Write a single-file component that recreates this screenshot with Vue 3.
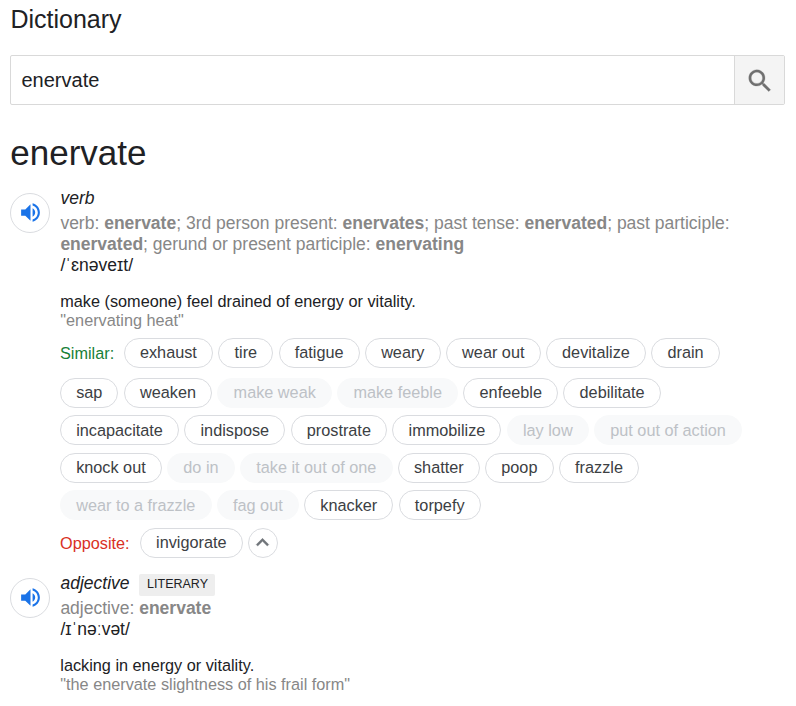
<script setup>
const volumePath =
  'M3 9v6h4l5 5V4L7 9H3zm13.5 3c0-1.77-1.02-3.29-2.5-4.03v8.05c1.48-.73 2.5-2.25 2.5-4.02zM14 3.23v2.06c2.89.86 5 3.54 5 6.71s-2.11 5.85-5 6.71v2.06c4.01-.91 7-4.49 7-8.77s-2.99-7.86-7-8.77z'

const firstSimilar = ['exhaust', 'tire', 'fatigue', 'weary', 'wear out', 'devitalize', 'drain']

const similarRows = [
  [
    { text: 'sap' },
    { text: 'weaken' },
    { text: 'make weak', muted: true },
    { text: 'make feeble', muted: true },
    { text: 'enfeeble' },
    { text: 'debilitate' },
  ],
  [
    { text: 'incapacitate' },
    { text: 'indispose' },
    { text: 'prostrate' },
    { text: 'immobilize' },
    { text: 'lay low', muted: true },
    { text: 'put out of action', muted: true },
  ],
  [
    { text: 'knock out' },
    { text: 'do in', muted: true },
    { text: 'take it out of one', muted: true },
    { text: 'shatter' },
    { text: 'poop' },
    { text: 'frazzle' },
  ],
  [
    { text: 'wear to a frazzle', muted: true },
    { text: 'fag out', muted: true },
    { text: 'knacker' },
    { text: 'torpefy' },
  ],
]
</script>

<template>
  <main class="dictionary">
    <h1 class="title">Dictionary</h1>

    <form class="search" @submit.prevent>
      <div class="search-field">enervate</div>
      <button class="search-button" aria-label="Search">
        <svg width="30" height="30" viewBox="0 0 24 24">
          <path d="M15.5 14h-.79l-.28-.27C15.41 12.59 16 11.11 16 9.5 16 5.91 13.09 3 9.5 3S3 5.91 3 9.5 5.91 16 9.5 16c1.61 0 3.09-.59 4.23-1.57l.27.28v.79l5 4.99L20.49 19l-4.99-5zm-6 0C7.01 14 5 11.99 5 9.5S7.01 5 9.5 5 14 7.01 14 9.5 11.99 14 9.5 14z" />
        </svg>
      </button>
    </form>

    <h2 class="headword">enervate</h2>

    <section class="entry">
      <button class="speaker" aria-label="Listen">
        <svg width="25" height="25" viewBox="0 0 24 24"><path :d="volumePath" /></svg>
      </button>
      <div class="body">
        <div class="pos"><i>verb</i></div>
        <div class="forms">
          <div class="line">verb: <b>enervate</b>; 3rd person present: <b>enervates</b>; past tense: <b>enervated</b>; past participle:</div>
          <div class="line"><b>enervated</b>; gerund or present participle: <b>enervating</b></div>
        </div>
        <div class="phonetic">/ˈɛnəveɪt/</div>
        <p class="definition">make (someone) feel drained of energy or vitality.</p>
        <p class="example">"enervating heat"</p>

        <div class="row lead">
          <span class="label similar">Similar:</span>
          <span v-for="word in firstSimilar" :key="word" class="chip">{{ word }}</span>
        </div>
        <div class="rows">
          <div v-for="(row, i) in similarRows" :key="i" class="row">
            <span v-for="chip in row" :key="chip.text" class="chip" :class="{ muted: chip.muted }">{{ chip.text }}</span>
          </div>
        </div>
        <div class="row">
          <span class="label opposite">Opposite:</span>
          <span class="chip">invigorate</span>
          <button class="collapse" aria-label="Show less">
            <svg width="25" height="25" viewBox="0 0 24 24"><path d="M12 8l-6 6 1.41 1.41L12 10.83l4.59 4.58L18 14z" /></svg>
          </button>
        </div>
      </div>
    </section>

    <section class="entry">
      <button class="speaker" aria-label="Listen">
        <svg width="25" height="25" viewBox="0 0 24 24"><path :d="volumePath" /></svg>
      </button>
      <div class="body">
        <div class="pos"><i>adjective</i><span class="tag">LITERARY</span></div>
        <div class="forms"><div class="line">adjective: <b>enervate</b></div></div>
        <div class="phonetic">/ɪˈnəːvət/</div>
        <p class="definition">lacking in energy or vitality.</p>
        <p class="example">"the enervate slightness of his frail form"</p>
      </div>
    </section>
  </main>
</template>

<style>
body {
  margin: 0;
  background: #fff;
}
</style>

<style scoped>
.dictionary {
  box-sizing: border-box;
  width: 796px;
  height: 706px;
  overflow: hidden;
  padding: 4px 11px 0 10px;
  font-family: 'Liberation Sans', Arial, sans-serif;
  color: #202124;
  white-space: nowrap;
}
h1,
h2,
p {
  margin: 0;
  font-weight: 400;
}
button {
  padding: 0;
  background: #fff;
}
.title {
  padding-left: 0.4px;
  font-size: 25px;
  line-height: 30px;
}
.search {
  display: flex;
  box-sizing: border-box;
  height: 50px;
  margin-top: 21px;
  border: 1px solid #d9d9d9;
  border-radius: 2px;
}
.search-field {
  flex: 1;
  padding-left: 10.5px;
  font-size: 20px;
  line-height: 48px;
}
.search-button {
  display: flex;
  box-sizing: border-box;
  width: 50px;
  align-items: center;
  justify-content: center;
  border: 0;
  border-left: 1px solid #d9d9d9;
  background: #f4f4f4;
}
.search-button svg {
  margin-top: 1px;
  fill: #707070;
  stroke: #707070;
  stroke-width: 0.2;
}
.headword {
  margin-top: 28px;
  padding-left: 0.3px;
  font-size: 35px;
  line-height: 40px;
}
.entry {
  display: flex;
  margin-top: 15px;
}
.speaker {
  display: flex;
  box-sizing: border-box;
  width: 40px;
  height: 40px;
  margin: 5px 10px 0 0;
  align-items: center;
  justify-content: center;
  border: 1px solid #dadce0;
  border-radius: 50%;
}
.speaker svg {
  margin-bottom: 1px;
  fill: #1a73e8;
}
.pos {
  display: flex;
  height: 25px;
  padding-left: 0.5px;
  font-size: 17.5px;
  line-height: 20px;
}
.tag {
  height: 22px;
  margin: 1px 0 0 9.5px;
  padding: 0 7px 0 8px;
  border-radius: 2px;
  background: #eee;
  font-size: 12.5px;
  line-height: 21px;
}
.forms,
.phonetic {
  padding-left: 0.4px;
  font-size: 17.5px;
  line-height: 21px;
}
.forms {
  color: #878787;
}
.definition {
  margin-top: 16px;
  padding-left: 0.3px;
  font-size: 16.25px;
  line-height: 19px;
}
.example {
  padding-left: 0.3px;
  color: #878787;
  font-size: 16.25px;
  line-height: 19px;
}
.row {
  display: flex;
  height: 30px;
  gap: 5.35px;
}
.lead {
  margin-top: 8px;
}
.rows {
  display: grid;
  gap: 7.45px;
  margin: 10px 0 7.65px;
}
.label {
  font-size: 16.25px;
  line-height: 31px;
}
.similar {
  margin-right: 4.3px;
  color: #188038;
}
.opposite {
  margin-right: 5px;
  color: #d93025;
}
.chip {
  box-sizing: border-box;
  height: 30px;
  padding: 0 15.15px;
  border: 1px solid #dadce0;
  border-radius: 15px;
  color: #3c4043;
  font-size: 16.25px;
  line-height: 26.6px;
}
.rows .row:nth-child(even) .chip {
  line-height: 28px;
}
.muted {
  border-color: #f8f9fa;
  background: #f8f9fa;
  color: #bdc1c6;
}
.collapse {
  display: flex;
  box-sizing: border-box;
  width: 30px;
  height: 30px;
  align-items: center;
  justify-content: center;
  border: 1px solid #dadce0;
  border-radius: 50%;
}
.collapse svg {
  margin-right: 1px;
  fill: #70757a;
  stroke: #70757a;
  stroke-width: 0.4;
}
</style>
